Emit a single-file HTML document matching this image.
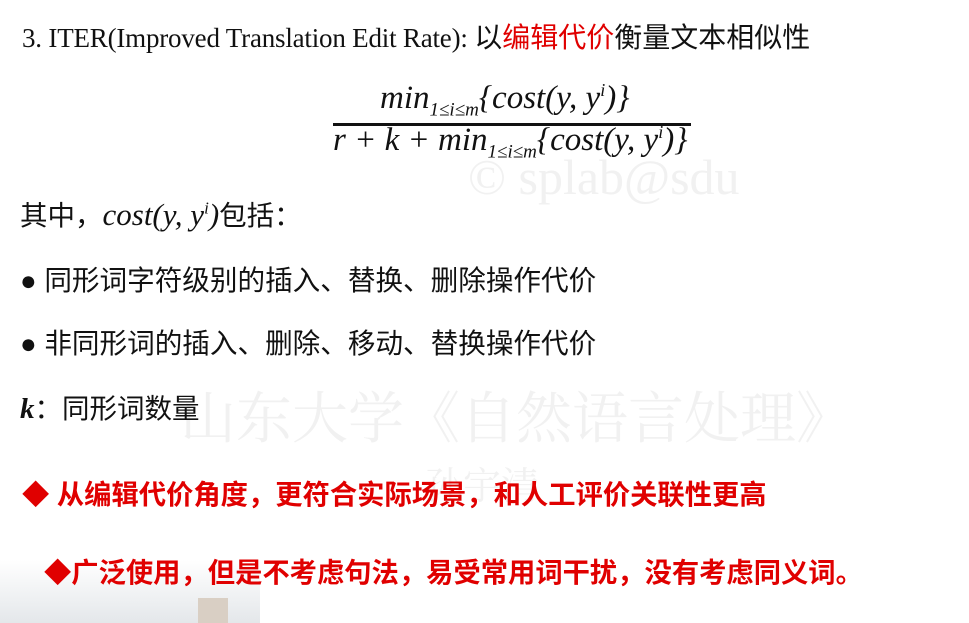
<!DOCTYPE html>
<html><head><meta charset="utf-8"><style>
body{margin:0;width:969px;height:623px;background:#fff;position:relative;overflow:hidden;font-family:"Liberation Serif","Noto Sans CJK SC",serif;color:#111}
.a{position:absolute;white-space:nowrap}
.cj{font-family:"Liberation Sans","Noto Sans CJK SC",sans-serif}
i{font-family:"Liberation Serif",serif;font-style:italic}
.wm{position:absolute;color:#f1f1f1;white-space:nowrap;font-family:"Liberation Serif","Noto Serif CJK SC",serif}
.red{color:#e00000;font-weight:bold;font-family:"Liberation Sans","Noto Sans CJK SC",sans-serif;font-size:27.3px}
</style></head><body>
<div class="wm" style="left:468px;top:148px;font-size:50px">© splab@sdu</div>
<div class="wm" style="left:180px;top:375px;font-size:56px">山东大学《自然语言处理》</div>
<div class="wm" style="left:425px;top:455px;font-size:38px">孙宇清</div>
<div style="position:absolute;left:0;top:560px;width:260px;height:63px;background:linear-gradient(to top,#e4e7ea,#fff)"></div>
<div style="position:absolute;left:198px;top:598px;width:30px;height:25px;background:#d9cfc4"></div>

<div class="a" style="left:22px;top:16px;font-size:27px;letter-spacing:-0.2px">3. ITER(Improved Translation Edit Rate): <span class="cj" style="letter-spacing:0;font-size:28px">以<span style="color:#e00000">编辑代价</span>衡量文本相似性</span></div>

<div class="a" style="left:380px;top:80px;font-size:33px"><i>min</i><sub style="font-size:19px"><i>1≤i≤m</i></sub><i>{cost(y, y<sup style="font-size:18px">i</sup>)}</i></div>
<div style="position:absolute;left:333px;top:123px;width:358px;height:3px;background:#111"></div>
<div class="a" style="left:333px;top:122px;font-size:33px"><i>r + k + min</i><sub style="font-size:19px"><i>1≤i≤m</i></sub><i>{cost(y, y<sup style="font-size:18px">i</sup>)}</i></div>

<div class="a cj" style="left:20px;top:193px;font-size:27.5px">其中，<i style="font-size:31px">cost(y, y<sup style="font-size:17px">i</sup>)</i>包括：</div>
<div class="a cj" style="left:20px;top:258px;font-size:27.6px">● 同形词字符级别的插入、替换、删除操作代价</div>
<div class="a cj" style="left:20px;top:321px;font-size:27.6px">● 非同形词的插入、删除、移动、替换操作代价</div>
<div class="a cj" style="left:20px;top:386px;font-size:27.5px"><i style="font-size:29px;font-weight:bold">k</i>：同形词数量</div>

<div class="a red" style="left:22px;top:472px">◆ 从编辑代价角度，更符合实际场景，和人工评价关联性更高</div>
<div class="a red" style="left:44px;top:550px">◆广泛使用，但是不考虑句法，易受常用词干扰，没有考虑同义词。</div>
</body></html>
